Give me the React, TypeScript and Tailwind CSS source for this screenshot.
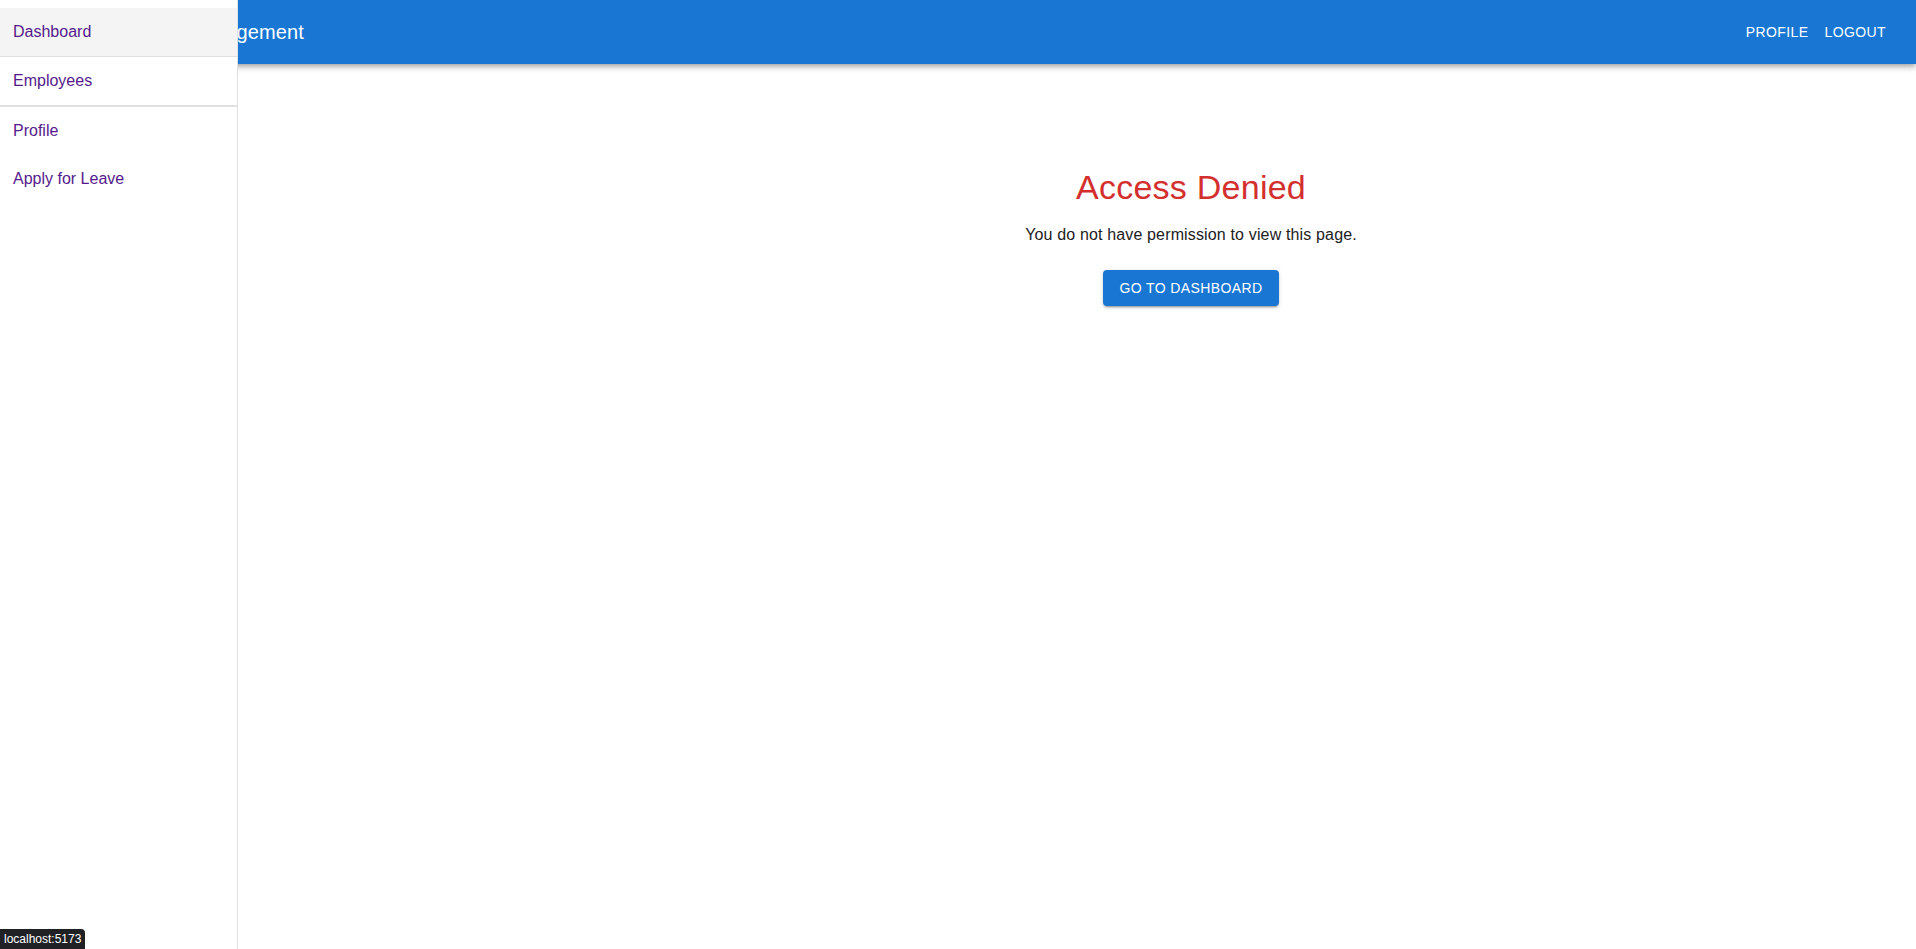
import React from 'react';

const navItems = [
  { label: 'Dashboard', active: true, divider: 'border-b border-[#e0e0e0]' },
  { label: 'Employees', active: false, divider: 'border-b-2 border-[#e0e0e0]' },
  { label: 'Profile', active: false, divider: '' },
  { label: 'Apply for Leave', active: false, divider: '' },
];

export default function App() {
  return (
    <div className="relative min-h-screen w-full bg-white font-['Liberation_Sans',Arial,sans-serif]">
      {/* Top app bar */}
      <header className="flex h-16 w-full items-center justify-between bg-[#1976d2] pl-[90px] pr-[22px] text-white shadow-[0px_2px_4px_-1px_rgba(0,0,0,0.2),0px_4px_5px_0px_rgba(0,0,0,0.14),0px_1px_10px_0px_rgba(0,0,0,0.12)]">
        <h1 className="text-[20px] leading-[1.6] tracking-[0.15px]">Employee Management</h1>
        <nav className="flex items-center">
          <button className="rounded px-2 py-1.5 text-[14px] uppercase leading-[1.75] tracking-[0.4px]">Profile</button>
          <button className="rounded px-2 py-1.5 text-[14px] uppercase leading-[1.75] tracking-[0.4px]">Logout</button>
        </nav>
      </header>

      {/* Side drawer, drawn over the app bar */}
      <aside className="fixed left-0 top-0 z-20 h-screen w-[238px] border-r border-[#e0e0e0] bg-white pt-2">
        <ul>
          {navItems.map((item) => (
            <li key={item.label} className={item.divider}>
              <a
                href="#"
                className={`flex h-12 items-center px-[13px] text-[16px] text-[#551a8b] ${item.active ? 'bg-[#f4f4f4]' : ''}`}
              >
                {item.label}
              </a>
            </li>
          ))}
        </ul>
      </aside>

      {/* Main content */}
      <main className="flex flex-col items-center pl-[466px] pt-[103px]">
        <h2 className="mb-[14px] text-[34px] leading-[1.235] tracking-[0.25px] text-[#d32f2f]">Access Denied</h2>
        <p className="text-[16px] leading-[1.5] tracking-[0.15px] text-[#212121]">
          You do not have permission to view this page.
        </p>
        <button className="mt-[23px] rounded bg-[#1976d2] px-4 py-1.5 text-[14px] uppercase leading-[1.75] tracking-[0.4px] text-white shadow-[0px_3px_1px_-2px_rgba(0,0,0,0.2),0px_2px_2px_0px_rgba(0,0,0,0.14),0px_1px_5px_0px_rgba(0,0,0,0.12)]">
          Go to Dashboard
        </button>
      </main>

      {/* Browser status bubble */}
      <div className="fixed bottom-0 left-0 z-30 flex h-5 items-center rounded-tr-[4px] bg-[#202124] px-1 text-[12px] text-white">
        localhost:5173
      </div>
    </div>
  );
}
